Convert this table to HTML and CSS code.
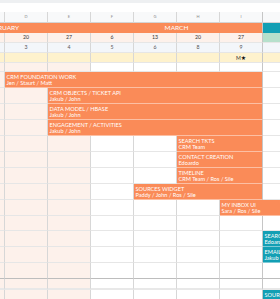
FILE: index.html
```html
<!DOCTYPE html>
<html>
<head>
<meta charset="utf-8">
<link rel="stylesheet" href="styles.css">
</head>
<body>
<div class="sheet">
  <div class="topbar"></div>
  <div class="grid">
    <div class="row r-hdr">
      <div class="cell hd"></div>
      <div class="cell hd">D</div>
      <div class="cell hd">E</div>
      <div class="cell hd">F</div>
      <div class="cell hd">G</div>
      <div class="cell hd">H</div>
      <div class="cell hd line-j">I</div>
      <div class="cell hd"></div>
      <div class="cell hd"></div>
    </div>
    <div class="row r-month">
      <div class="cell month feb s3">FEBRUARY</div>
      <div class="cell month s4 line-j">MARCH</div>
      <div class="cell month teal s2"></div>
    </div>
    <div class="row r-small">
      <div class="cell date"></div>
      <div class="cell date num">20</div>
      <div class="cell date num">27</div>
      <div class="cell date num">6</div>
      <div class="cell date num">13</div>
      <div class="cell date num">20</div>
      <div class="cell date num line-j">27</div>
      <div class="cell mint"></div>
      <div class="cell mint"></div>
    </div>
    <div class="row r-small">
      <div class="cell week"></div>
      <div class="cell week num">3</div>
      <div class="cell week num">4</div>
      <div class="cell week num">5</div>
      <div class="cell week num">6</div>
      <div class="cell week num">8</div>
      <div class="cell week num line-j">9</div>
      <div class="cell week"></div>
      <div class="cell week"></div>
    </div>
    <div class="row r-small">
      <div class="cell yel"></div>
      <div class="cell yel"></div>
      <div class="cell yel"></div>
      <div class="cell yel"></div>
      <div class="cell yel"></div>
      <div class="cell yel"></div>
      <div class="cell yel num line-j">M<span class="star">★</span></div>
      <div class="cell yel"></div>
      <div class="cell yel"></div>
    </div>
    <div class="row r-blank">
      <div class="cell pink"></div>
      <div class="cell pink"></div>
      <div class="cell pink"></div>
      <div class="cell"></div>
      <div class="cell"></div>
      <div class="cell"></div>
      <div class="cell line-j"></div>
      <div class="cell"></div>
      <div class="cell"></div>
    </div>

    <div class="row r-task">
      <div class="cell pink"></div>
      <div class="cell bar s6 line-j"><span class="t">CRM FOUNDATION WORK</span><span class="p">Jen / Staurt / Matt</span></div>
      <div class="cell"></div>
      <div class="cell"></div>
    </div>
    <div class="row r-task">
      <div class="cell pink"></div>
      <div class="cell pink"></div>
      <div class="cell bar s5 line-j"><span class="t">CRM OBJECTS / TICKET API</span><span class="p">Jakub / John</span></div>
      <div class="cell"></div>
      <div class="cell"></div>
    </div>
    <div class="row r-task">
      <div class="cell pink"></div>
      <div class="cell pink"></div>
      <div class="cell bar s5 line-j"><span class="t">DATA MODEL / HBASE</span><span class="p">Jakub / John</span></div>
      <div class="cell"></div>
      <div class="cell"></div>
    </div>
    <div class="row r-task">
      <div class="cell pink"></div>
      <div class="cell pink"></div>
      <div class="cell bar s5 line-j"><span class="t">ENGAGEMENT / ACTIVITIES</span><span class="p">Jakub / John</span></div>
      <div class="cell"></div>
      <div class="cell"></div>
    </div>
    <div class="row r-task">
      <div class="cell pink"></div>
      <div class="cell pink"></div>
      <div class="cell pink"></div>
      <div class="cell"></div>
      <div class="cell"></div>
      <div class="cell bar s2 line-j"><span class="t">SEARCH TKTS</span><span class="p">CRM Team</span></div>
      <div class="cell"></div>
      <div class="cell"></div>
    </div>
    <div class="row r-task">
      <div class="cell pink"></div>
      <div class="cell pink"></div>
      <div class="cell pink"></div>
      <div class="cell"></div>
      <div class="cell"></div>
      <div class="cell bar s2 line-j"><span class="t">CONTACT CREATION</span><span class="p">Edoardo</span></div>
      <div class="cell"></div>
      <div class="cell"></div>
    </div>
    <div class="row r-task">
      <div class="cell pink"></div>
      <div class="cell pink"></div>
      <div class="cell pink"></div>
      <div class="cell"></div>
      <div class="cell"></div>
      <div class="cell bar s2 line-j"><span class="t">TIMELINE</span><span class="p">CRM Team / Ros / Sile</span></div>
      <div class="cell"></div>
      <div class="cell"></div>
    </div>
    <div class="row r-task">
      <div class="cell pink"></div>
      <div class="cell pink"></div>
      <div class="cell pink"></div>
      <div class="cell"></div>
      <div class="cell bar s3 line-j"><span class="t">SOURCES WIDGET</span><span class="p">Paddy / John / Ros / Sile</span></div>
      <div class="cell"></div>
      <div class="cell"></div>
    </div>
    <div class="row r-task">
      <div class="cell pink"></div>
      <div class="cell pink"></div>
      <div class="cell pink"></div>
      <div class="cell"></div>
      <div class="cell"></div>
      <div class="cell"></div>
      <div class="cell bar s3"><span class="t">MY INBOX UI</span><span class="p">Sara / Ros / Sile</span></div>
    </div>
    <div class="row r-task r-15">
      <div class="cell pink"></div>
      <div class="cell pink"></div>
      <div class="cell pink"></div>
      <div class="cell"></div>
      <div class="cell"></div>
      <div class="cell"></div>
      <div class="cell line-j"></div>
      <div class="cell"></div>
      <div class="cell"></div>
    </div>
    <div class="row r-task">
      <div class="cell pink"></div>
      <div class="cell pink"></div>
      <div class="cell pink"></div>
      <div class="cell"></div>
      <div class="cell"></div>
      <div class="cell"></div>
      <div class="cell line-j"></div>
      <div class="cell bar teal-bar s2"><span class="t">SEARC</span><span class="p">Edoard</span></div>
    </div>
    <div class="row r-task">
      <div class="cell pink"></div>
      <div class="cell pink"></div>
      <div class="cell pink"></div>
      <div class="cell"></div>
      <div class="cell"></div>
      <div class="cell"></div>
      <div class="cell line-j"></div>
      <div class="cell bar teal-bar s2"><span class="t">EMAIL</span><span class="p">Jakub .</span></div>
    </div>
    <div class="row r-task r-dark">
      <div class="cell pink"></div>
      <div class="cell pink"></div>
      <div class="cell pink"></div>
      <div class="cell"></div>
      <div class="cell"></div>
      <div class="cell"></div>
      <div class="cell line-j"></div>
      <div class="cell"></div>
      <div class="cell"></div>
    </div>
    <div class="row r-thin">
      <div class="cell pink"></div>
      <div class="cell pink"></div>
      <div class="cell pink"></div>
      <div class="cell"></div>
      <div class="cell"></div>
      <div class="cell"></div>
      <div class="cell line-j"></div>
      <div class="cell"></div>
      <div class="cell"></div>
    </div>
    <div class="row r-task">
      <div class="cell pink"></div>
      <div class="cell pink"></div>
      <div class="cell pink"></div>
      <div class="cell"></div>
      <div class="cell"></div>
      <div class="cell"></div>
      <div class="cell line-j"></div>
      <div class="cell bar teal-bar s2"><span class="t">SOURC</span></div>
    </div>
  </div>
</div>
</body>
</html>
```

FILE: styles.css
```css
html, body {
  margin: 0;
  padding: 0;
  background: #ffffff;
}

.sheet {
  width: 280px;
  height: 299px;
  overflow: hidden;
  font-family: Lato, "Open Sans", "Liberation Sans", sans-serif;
  color: #333333;
}

.topbar {
  height: 12px;
  box-sizing: border-box;
  border-top: 3px solid #eef0f2;
  background: #ffffff;
}

.grid {
  margin-left: -38px;
  width: 387px;
}

.row {
  display: grid;
  grid-template-columns: repeat(9, 43px);
}

.cell {
  box-sizing: border-box;
  border-right: 1px solid #d7d7d7;
  border-bottom: 1px solid #e6e6e6;
  min-width: 0;
  overflow: hidden;
  white-space: nowrap;
}

.line-j {
  border-right-color: #c6c6c6;
}

.s2 { grid-column: span 2; }
.s3 { grid-column: span 3; }
.s4 { grid-column: span 4; }
.s5 { grid-column: span 5; }
.s6 { grid-column: span 6; }

/* row heights (include bottom border) */
.r-hdr { height: 11px; }
.r-month { height: 10px; }
.r-small { height: 10px; }
.r-blank { height: 9px; }
.r-task { height: 16px; }
.r-15 { height: 15px; }
.r-thin { height: 11px; }
.r-thin .cell { border-bottom: 2px solid #e8e8e8; }
.r-dark .cell { border-bottom-color: #bdbdbd; }

.hd {
  background: #f8f9fa;
  color: #8a8a8a;
  font-size: 4px;
  line-height: 10px;
  text-align: center;
  border-bottom-color: #d4d4d4;
}

.month {
  background: #fa8b58;
  color: #ffffff;
  font-size: 6.5px;
  line-height: 9px;
  text-align: center;
  border-right-color: #fa8b58;
  border-bottom-color: #fa8b58;
}

.month.feb {
  text-align: right;
  padding-right: 71px;
}

.month.line-j {
  border-right-color: #c6c6c6;
}

.month.teal {
  background: #139fb4;
  border-bottom-color: #139fb4;
}

.num {
  font-size: 5.2px;
  line-height: 9px;
  text-align: center;
  color: #333333;
}

.star {
  font-family: "DejaVu Sans", sans-serif;
  font-size: 6px;
  color: #111111;
}

.date {
  background: #fdf1eb;
}

.mint {
  background: #b6e0cc;
}

.week {
  background: #f3f6fa;
  color: #555555;
}

.yel {
  background: #fef2cd;
}

.pink {
  background: #fdf1eb;
}

.bar {
  background: #fa8b58;
  color: #ffffff;
  border-bottom-color: rgba(255, 255, 255, 0.45);
  padding: 2px 0 0 1.5px;
  font-size: 5.6px;
  line-height: 6px;
  display: flex;
  flex-direction: column;
}

.teal-bar {
  background: #139fb4;
  border-right-color: #139fb4;
}
```
